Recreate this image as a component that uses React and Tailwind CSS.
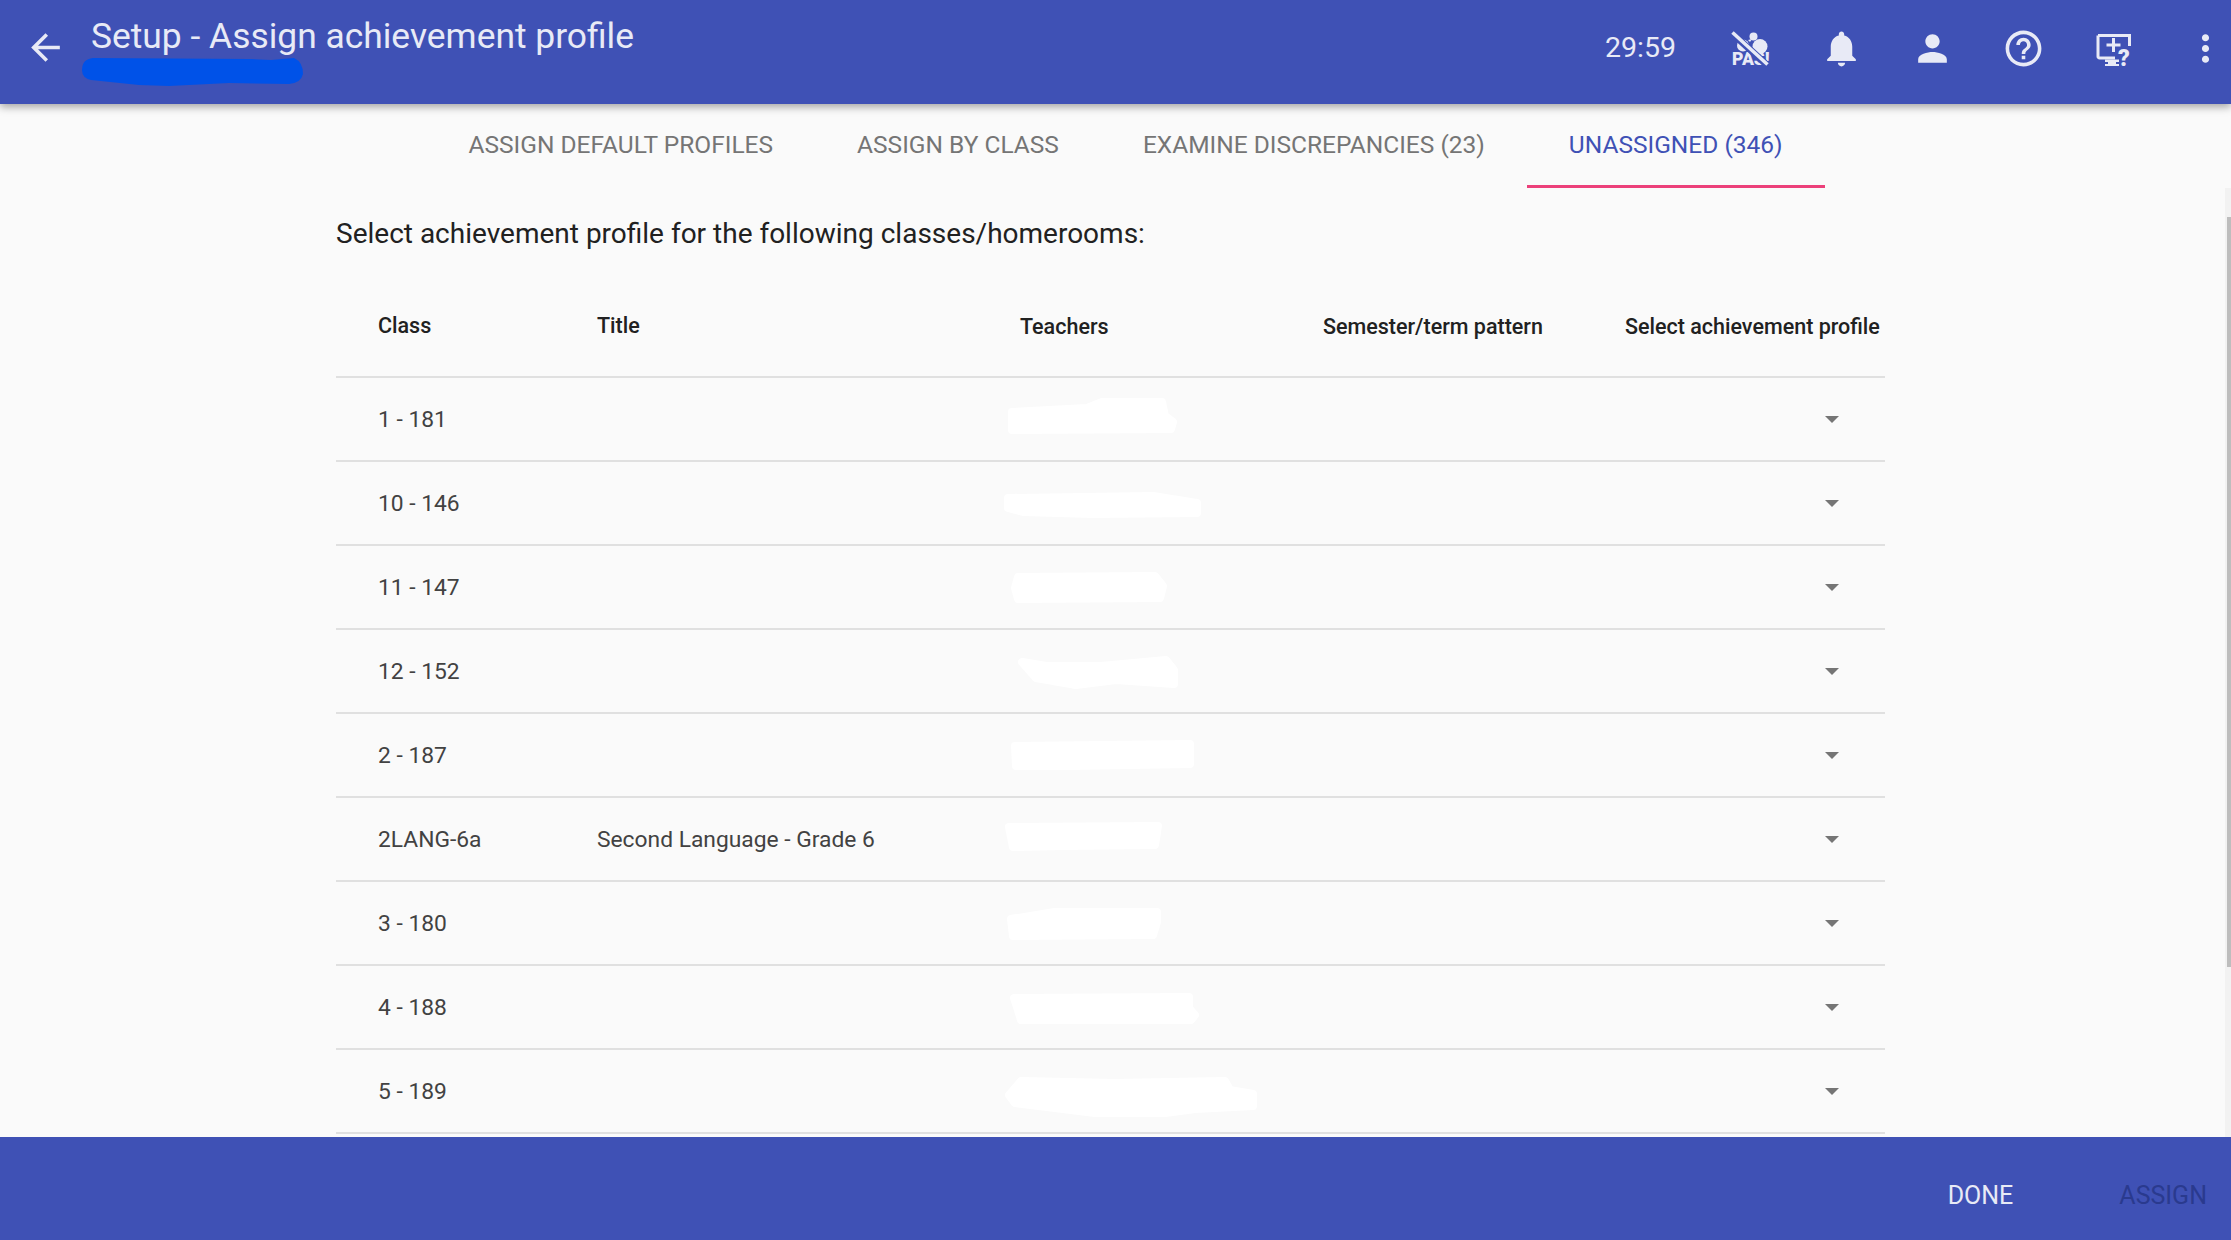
const rows = [
  { cls: '1 - 181', x: 1007, y: -22, w: 170, h: 36, pts: '5,14 80,10 95,4 155,4 158,18 166,24 164,31 5,32' },
  { cls: '10 - 146', x: 1003, y: -12, w: 198, h: 26, pts: '5,6 150,4 175,8 194,11 194,21 90,22 20,20 5,16' },
  { cls: '11 - 147', x: 1010, y: -16, w: 158, h: 31, pts: '8,5 145,4 153,14 150,26 8,27 5,16' },
  { cls: '12 - 152', x: 1016, y: -16, w: 163, h: 33, pts: '6,6 30,10 85,10 150,4 158,14 158,28 100,24 60,29 20,22' },
  { cls: '2 - 187', x: 1010, y: -16, w: 185, h: 30, pts: '5,6 180,4 180,24 60,26 6,26' },
  { cls: '2LANG-6a', title: 'Second Language - Grade 6', x: 1003, y: -18, w: 160, h: 29, pts: '6,5 155,4 152,23 60,24 10,25' },
  { cls: '3 - 180', x: 1005, y: -16, w: 156, h: 32, pts: '6,11 50,4 152,4 152,14 148,27 8,28' },
  { cls: '4 - 188', x: 1009, y: -15, w: 190, h: 32, pts: '5,5 180,4 180,15 186,22 182,27 12,27 8,14' },
  { cls: '5 - 189', x: 1005, y: -15, w: 252, h: 40, pts: '16,4 110,6 220,4 225,13 248,17 248,29 190,32 160,36 90,36 10,26 4,18' },
]

function Redaction({ x, y, w, h, pts }) {
  return (
    <svg className="absolute" style={{ left: x - 336, top: 42 + y }} width={w} height={h} viewBox={`0 0 ${w} ${h}`}>
      <polygon points={pts} fill="#fff" stroke="#fff" strokeWidth="8" strokeLinejoin="round" />
    </svg>
  )
}

function Icon({ children }) {
  return (
    <svg className="w-[43px] h-[43px] shrink-0 fill-[#e8eaf6]" viewBox="0 0 24 24">
      {children}
    </svg>
  )
}

function PassIcon() {
  return (
    <svg className="w-[43px] h-[43px] shrink-0" viewBox="0 0 43 43">
      <circle cx="24.5" cy="9.5" r="4" fill="#e8eaf6" />
      <path d="M19 13l4-1-2 3z" fill="#e8eaf6" />
      <circle cx="14" cy="18.5" r="6" fill="#e8eaf6" />
      <circle cx="31" cy="19.5" r="7.5" fill="#e8eaf6" />
      <text x="3" y="37.5" fontFamily="Roboto, sans-serif" fontWeight="900" fontSize="17.5" fill="#e8eaf6">PAS!</text>
      <path d="M4 7l35 32" stroke="#3f51b5" strokeWidth="7" />
      <path d="M3.5 5.5l35 32" stroke="#e8eaf6" strokeWidth="3.5" />
    </svg>
  )
}

function DesktopHelpIcon() {
  return (
    <svg className="w-[43px] h-[43px] shrink-0" viewBox="0 0 43 43">
      <path d="M5 8.5h31.5V19M22 31H6.5A1.5 1.5 0 0 1 5 29.5V8.5" fill="none" stroke="#e8eaf6" strokeWidth="3" />
      <path d="M12 33h14v2.5h-3v2h3v2H12v-2h3v-2h-3z" fill="#e8eaf6" transform="translate(0 -.5)" />
      <path d="M13.5 16.5h5.5v-5.5h3v5.5h5.5v3H22v5.5h-3v-5.5h-5.5z" fill="#e8eaf6" />
      <text x="25" y="38.5" fontFamily="Roboto, sans-serif" fontWeight="900" fontSize="23" fill="#e8eaf6">?</text>
    </svg>
  )
}

export default function App() {
  return (
    <div className="h-[1240px] w-[2231px] flex flex-col overflow-hidden bg-[#fafafa] font-['Roboto',sans-serif]">
      {/* Top bar */}
      <div className="relative z-10 h-[104px] shrink-0 bg-[#3f51b5] text-[#e8eaf6] flex items-center justify-between shadow-[0_3px_8px_rgba(0,0,0,0.35)]">
        <div className="flex items-start self-start pl-[24px]">
          <svg className="w-[43px] h-[43px] mt-[26px] fill-[#e8eaf6]" viewBox="0 0 24 24">
            <path d="M20 11H7.83l5.59-5.59L12 4l-8 8 8 8 1.41-1.41L7.83 13H20v-2z" />
          </svg>
          <div className="relative ml-[24px] mt-[16px] text-[35.4px] leading-[40px] whitespace-nowrap">
            Setup - Assign achievement profile
            {/* blue marker over the school name */}
            <svg className="absolute left-[-12px] top-[40px]" width="226" height="32" viewBox="0 0 226 32">
              <path d="M3 14Q3 3 14 2L170 3 192 4 215 2Q224 6 224 18 222 27 210 28L150 27 90 30 60 29 12 24Q3 22 3 14z" fill="#0052e8" />
            </svg>
          </div>
        </div>
        <div className="flex items-center gap-[48px] pr-[4px] pb-[8px]">
          <span className="text-[28.5px] mr-[5px]">29:59</span>
          <PassIcon />
          <Icon>
            <path d="M12 22c1.1 0 2-.9 2-2h-4c0 1.1.9 2 2 2zm6-6v-5c0-3.07-1.63-5.64-4.5-6.32V4c0-.83-.67-1.5-1.5-1.5s-1.5.67-1.5 1.5v.68C7.64 5.36 6 7.92 6 11v5l-2 2v1h16v-1l-2-2z" />
          </Icon>
          <Icon>
            <path d="M12 12c2.21 0 4-1.79 4-4s-1.79-4-4-4-4 1.79-4 4 1.79 4 4 4zm0 2c-2.67 0-8 1.34-8 4v2h16v-2c0-2.66-5.33-4-8-4z" />
          </Icon>
          <Icon>
            <path d="M11 18h2v-2h-2v2zm1-16C6.48 2 2 6.48 2 12s4.48 10 10 10 10-4.48 10-10S17.52 2 12 2zm0 18c-4.41 0-8-3.59-8-8s3.59-8 8-8 8 3.59 8 8-3.59 8-8 8zm0-14c-2.21 0-4 1.79-4 4h2c0-1.1.9-2 2-2s2 .9 2 2c0 2-3 1.75-3 5h2c0-2.25 3-2.5 3-5 0-2.21-1.79-4-4-4z" />
          </Icon>
          <DesktopHelpIcon />
          <Icon>
            <path d="M12 8c1.1 0 2-.9 2-2s-.9-2-2-2-2 .9-2 2 .9 2 2 2zm0 2c-1.1 0-2 .9-2 2s.9 2 2 2 2-.9 2-2-.9-2-2-2zm0 6c-1.1 0-2 .9-2 2s.9 2 2 2 2-.9 2-2-.9-2-2-2z" />
          </Icon>
        </div>
      </div>

      {/* Page body */}
      <div className="relative flex-1 overflow-hidden pl-[336px]">
        {/* Tabs */}
        <div className="flex h-[84px] ml-[90.5px] text-[24.5px] text-[#757575] whitespace-nowrap">
          <div className="px-[42px] pt-[2px] flex items-center border-b-[3px] border-transparent">ASSIGN DEFAULT PROFILES</div>
          <div className="px-[42px] pt-[2px] flex items-center border-b-[3px] border-transparent">ASSIGN BY CLASS</div>
          <div className="px-[42px] pt-[2px] flex items-center border-b-[3px] border-transparent">EXAMINE DISCREPANCIES (23)</div>
          <div className="px-[42px] pt-[2px] flex items-center text-[#3f51b5] border-b-[3px] border-[#ec407a]">UNASSIGNED (346)</div>
        </div>

        <p className="mt-[28px] text-[28px] leading-[36px] text-[#212121]">
          Select achievement profile for the following classes/homerooms:
        </p>

        {/* Table */}
        <div className="w-[1549px] mt-[13px] text-[#212121]">
          <div className="grid grid-cols-[261px_423px_303px_302px_260px] h-[113px] pt-[14px] items-center border-b-2 border-[#e0e0e0] text-[21.5px] font-medium whitespace-nowrap">
            <div className="pl-[42px] pb-[3px]">Class</div>
            <div className="pb-[3px]">Title</div>
            <div>Teachers</div>
            <div>Semester/term pattern</div>
            <div>Select achievement profile</div>
          </div>
          {rows.map(r => (
            <div key={r.cls} className="relative grid grid-cols-[261px_423px_303px_302px_260px] h-[84px] items-center border-b-2 border-[#e0e0e0] text-[22.8px] text-[#424242] whitespace-nowrap">
              <div className="pl-[42px] pt-[2px]">{r.cls}</div>
              <div className="pt-[2px]">{r.title}</div>
              <div />
              <div />
              <div className="flex justify-end pr-[46px]">
                <span className="w-0 h-0 border-x-[7px] border-x-transparent border-t-[7px] border-t-[#757575]" />
              </div>
              <Redaction x={r.x} y={r.y} w={r.w} h={r.h} pts={r.pts} />
            </div>
          ))}
        </div>

        {/* Scrollbar */}
        <div className="absolute right-0 top-[84px] bottom-0 w-[6px] bg-[#f2f2f2]">
          <div className="absolute right-0 w-[4px] top-[29px] h-[750px] bg-[#bdbdbd]" />
        </div>
      </div>

      {/* Bottom bar */}
      <div className="h-[103px] shrink-0 bg-[#3f51b5] flex items-center justify-end text-[25px] pr-[24px] pt-[14px] gap-[106px]">
        <span className="text-[#e8eaf6]">DONE</span>
        <span className="text-[#2a3a8e]">ASSIGN</span>
      </div>
    </div>
  )
}
